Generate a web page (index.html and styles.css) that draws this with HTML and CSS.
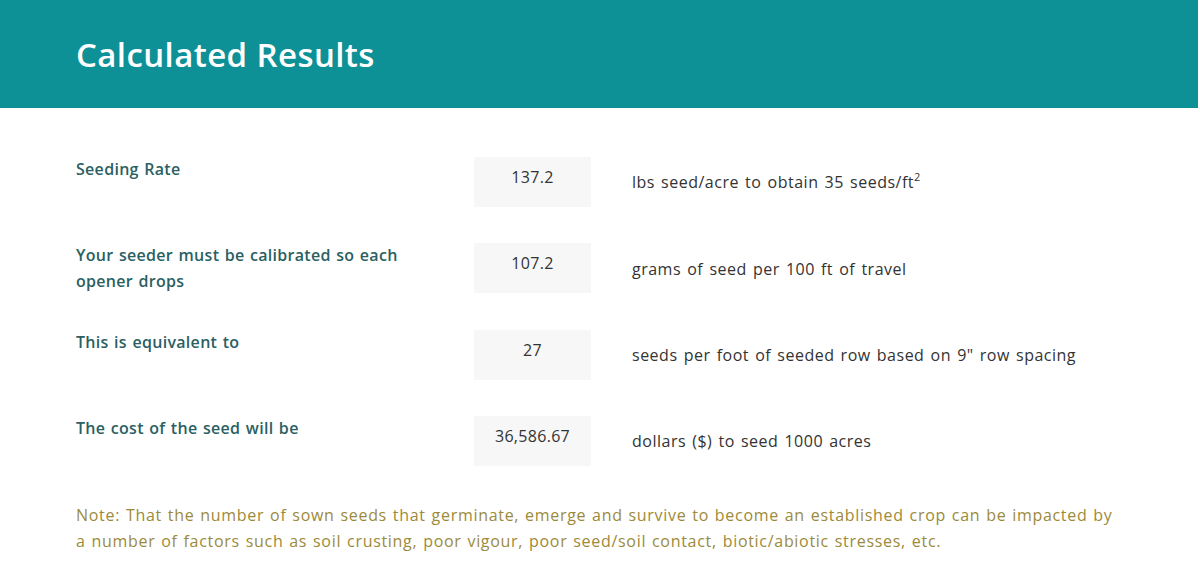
FILE: index.html
```html
<!DOCTYPE html>
<html lang="en">
<head>
    <meta charset="UTF-8">
    <title>Calculated Results</title>
    <meta name="viewport" content="width=device-width, initial-scale=1">
    <link rel="stylesheet" href="styles.css">
</head>
<body>
    <div class="results-head">
      <h2>Calculated Results</h2>
    </div>
    <div class="results">
      <div class="result-row">
        <div class="label">Seeding Rate</div>
        <div class="value">137.2</div>
        <div class="unit">lbs seed/acre to obtain 35 seeds/ft<sup>2</sup></div>
      </div>
      <div class="result-row">
        <div class="label">Your seeder must be calibrated so each opener drops</div>
        <div class="value">107.2</div>
        <div class="unit">grams of seed per 100 ft of travel</div>
      </div>
      <div class="result-row">
        <div class="label">This is equivalent to</div>
        <div class="value">27</div>
        <div class="unit">seeds per foot of seeded row based on 9" row spacing</div>
      </div>
      <div class="result-row">
        <div class="label">The cost of the seed will be</div>
        <div class="value">36,586.67</div>
        <div class="unit">dollars ($) to seed 1000 acres</div>
      </div>
      <p class="note">Note: That the number of sown seeds that germinate, emerge and survive to become an established crop can be impacted by a number of factors such as soil crusting, poor vigour, poor seed/soil contact, biotic/abiotic stresses, etc.</p>
    </div>
</body>
</html>
```

FILE: styles.css
```css
body {
  font-family: 'Open Sans', 'Liberation Sans', Arial, sans-serif;
  background: #fff;
  margin: 0;
  padding: 0;
}
.results-head {
  background: #0e9196;
  height: 108px;
  margin-right: 2px;
  padding: 0 76px;
  display: flex;
  align-items: center;
}
.results-head h2 {
  margin: 0;
  color: #fff;
  font-size: 33px;
  font-weight: 600;
  letter-spacing: 0.4px;
}
.results {
  padding: 49px 76px 0 76px;
}
.result-row {
  display: grid;
  grid-template-columns: 398px 117px 1fr;
  margin-bottom: 36px;
  font-size: 16px;
  line-height: 26px;
}
.label {
  color: #2b5f63;
  font-weight: 600;
  letter-spacing: 0.3px;
  word-spacing: 1px;
  padding-right: 50px;
  margin-top: -1px;
}
.value {
  background: #f7f7f7;
  height: 50px;
  box-sizing: border-box;
  padding-top: 7px;
  text-align: center;
  color: #333;
  letter-spacing: 0.3px;
}
.unit {
  align-self: center;
  padding-left: 41px;
  color: #333;
  letter-spacing: 0.5px;
  word-spacing: 1.5px;
}
.unit sup {
  font-size: 11px;
  line-height: 0;
  vertical-align: 7px;
}
.note {
  margin: 0;
  color: #9c8a3a;
  font-size: 16px;
  line-height: 26px;
  font-weight: 500;
  letter-spacing: 0.7px;
  word-spacing: 1px;
}
```
